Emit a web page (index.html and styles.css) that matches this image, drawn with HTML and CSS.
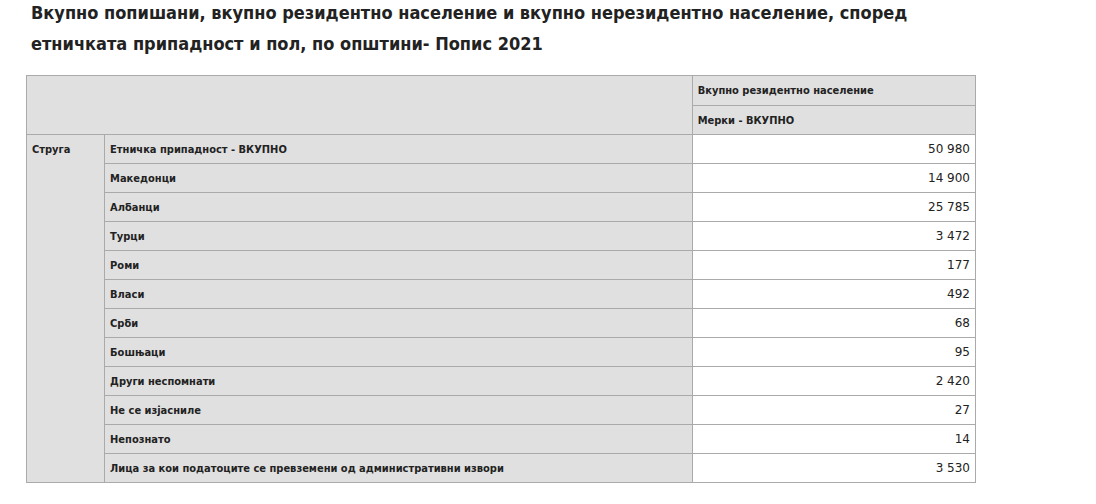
FILE: index.html
```html
<!DOCTYPE html>
<html lang="mk">
<head>
<meta charset="utf-8">
<title>Попис 2021</title>
<link rel="stylesheet" href="styles.css">
</head>
<body>
<div class="page">
  <h1 class="title">Вкупно попишани, вкупно резидентно население и вкупно нерезидентно население, според етничката припадност и пол, по општини- Попис 2021</h1>
  <table class="data">
    <colgroup>
      <col class="c1"><col class="c2"><col class="c3">
    </colgroup>
    <thead>
      <tr class="hr1"><th class="blank" colspan="2" rowspan="2"></th><th class="hd">Вкупно резидентно население</th></tr>
      <tr><th class="hd">Мерки - ВКУПНО</th></tr>
    </thead>
    <tbody>
      <tr><th class="mun" rowspan="12">Струга</th><th class="lbl">Етничка припадност - ВКУПНО</th><td class="num">50 980</td></tr>
      <tr><th class="lbl">Македонци</th><td class="num">14 900</td></tr>
      <tr><th class="lbl">Албанци</th><td class="num">25 785</td></tr>
      <tr><th class="lbl">Турци</th><td class="num">3 472</td></tr>
      <tr><th class="lbl">Роми</th><td class="num">177</td></tr>
      <tr><th class="lbl">Власи</th><td class="num">492</td></tr>
      <tr><th class="lbl">Срби</th><td class="num">68</td></tr>
      <tr><th class="lbl">Бошњаци</th><td class="num">95</td></tr>
      <tr><th class="lbl">Други неспомнати</th><td class="num">2 420</td></tr>
      <tr><th class="lbl">Не се изјасниле</th><td class="num">27</td></tr>
      <tr><th class="lbl">Непознато</th><td class="num">14</td></tr>
      <tr><th class="lbl">Лица за кои податоците се превземени од административни извори</th><td class="num">3 530</td></tr>
    </tbody>
  </table>
</div>
</body>
</html>
```
FILE: styles.css
```css
html, body {
  margin: 0;
  padding: 0;
  background: #ffffff;
}
body {
  font-family: "DejaVu Sans Condensed", "DejaVu Sans", Verdana, sans-serif;
  font-stretch: condensed;
  color: #222222;
}
.page {
  padding: 0 0 0 26px;
  width: 950px;
}
.title {
  margin: -3px 0 0 5px;
  font-size: 18px;
  line-height: 31px;
  font-weight: bold;
  color: #222222;
}
.data {
  margin-top: 16px;
  border-collapse: collapse;
  width: 950px;
  table-layout: fixed;
  font-size: 11px;
}
.c1 { width: 78px; }
.c2 { width: 587px; }
.c3 { width: 283px; }
.data th, .data td {
  border: 1px solid #aaaaaa;
  height: 29px;
  padding: 0 5px;
  box-sizing: border-box;
  text-align: left;
  vertical-align: middle;
  white-space: nowrap;
}
.data .hr1 th {
  height: 30px;
}
.data th {
  background: #e0e0e0;
  font-weight: bold;
}
.data .mun {
  vertical-align: top;
  padding-top: 8px;
}
.data td.num {
  background: #ffffff;
  text-align: right;
  font-weight: normal;
  font-family: "DejaVu Sans", Verdana, sans-serif;
  font-stretch: normal;
  font-size: 12px;
}
```
